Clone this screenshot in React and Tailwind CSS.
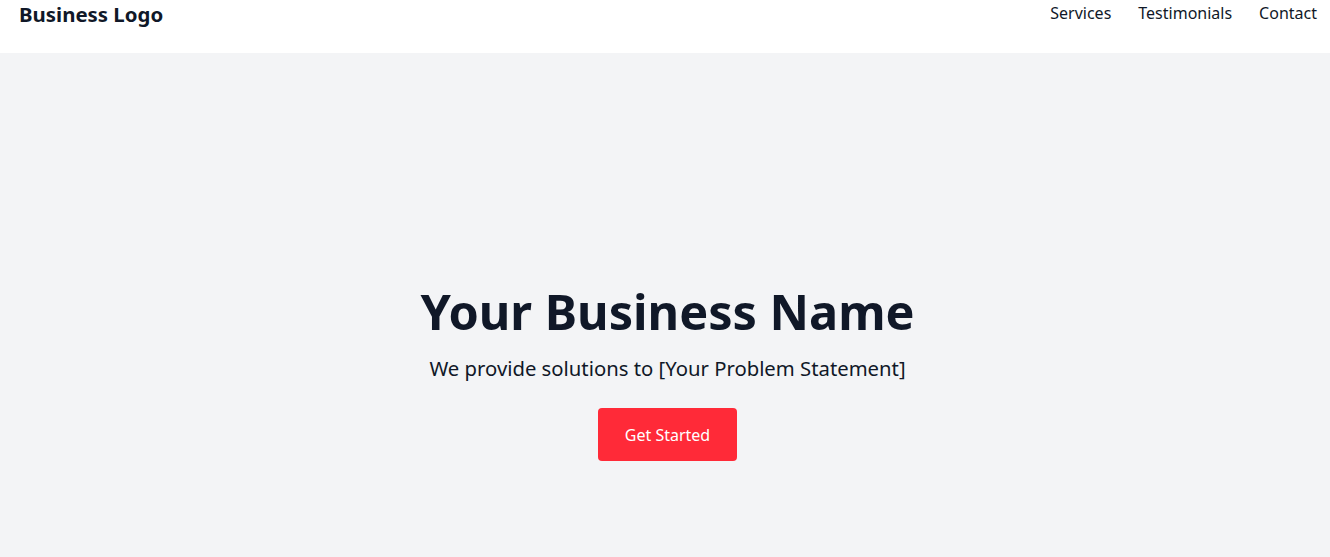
const NAV = ["Services", "Testimonials", "Contact"];

export default function App() {
  return (
    <div className="min-h-screen flex flex-col bg-gray-100 font-['Noto_Sans','Open_Sans',sans-serif] text-gray-900">
      {/* Header */}
      <header className="h-[53px] shrink-0 bg-white flex items-start justify-between pl-[19px] pr-[13px]">
        <div className="text-[20.4px] font-bold leading-7 text-gray-900">Business Logo</div>
        <nav className="flex gap-[27px] text-base leading-6 pt-px">
          {NAV.map(item => (
            <a key={item} href="#" className="text-gray-900">{item}</a>
          ))}
        </nav>
      </header>

      {/* Hero */}
      <section className="flex-1 flex flex-col items-center pt-[234px] pb-24 pl-[5px] text-center">
        <h1 className="text-[48.6px] leading-[48px] font-bold text-gray-900">Your Business Name</h1>
        <p className="mt-[19px] text-[20.3px] leading-7 text-gray-900">
          We provide solutions to [Your Problem Statement]
        </p>
        <button className="mt-[26px] h-[53px] px-[27px] rounded bg-[#ff2a38] text-white text-base">
          Get Started
        </button>
      </section>
    </div>
  );
}
